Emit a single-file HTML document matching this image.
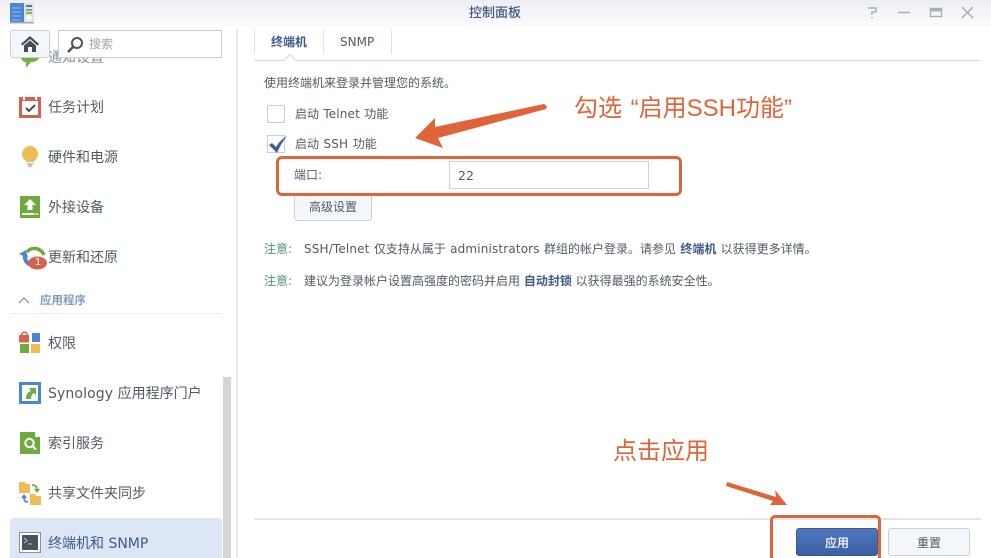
<!DOCTYPE html>
<html lang="zh"><head><meta charset="utf-8"><title>控制面板</title>
<style>
html,body{margin:0;padding:0;background:#fff}
#p{position:relative;width:991px;height:558px;overflow:hidden;background:#fff;font-family:"DejaVu Sans","Noto Sans CJK SC",sans-serif;color:#505a64;font-size:12px}
.t{position:absolute;white-space:nowrap;line-height:16px}
.m{font-size:14px;line-height:20px;color:#505a64;left:48px}
.a{position:absolute}
.l{letter-spacing:.15px}
.o{font-family:"Liberation Sans","Noto Sans CJK SC",sans-serif;color:#e0643a;font-size:24px;line-height:28px}
svg{position:absolute;overflow:visible}
</style></head><body><div id="p">
<div class="a" style="left:0;top:0;width:991px;height:28px;background:linear-gradient(#eceef4,#fdfdfe)"></div>
<svg style="left:10px;top:3px" width="24" height="20"><rect width="14" height="19" fill="#4a86d4"/><rect x="14" width="10" height="19" fill="#dfe3e8"/><path d="M2 5h9M2 9h9M2 13h9M2 17h9" stroke="#8fbbea"/><path d="M16 3h6" stroke="#4a78b0" stroke-width="2"/><path d="M16 7h6" stroke="#555"/><path d="M16 10h6" stroke="#8ab83a" stroke-width="2"/><circle cx="19" cy="15" r="3" fill="#f5f7f9"/><rect y="19" width="24" height="1.500" fill="#aaa"/></svg>
<div class="t" style="left:395px;width:200px;text-align:center;top:6px;font-size:13px;color:#3f5a80;font-weight:500">控制面板</div>
<svg style="left:860px;top:5px" width="120" height="16" fill="none" stroke="#a8b0ba" stroke-width="1.500"><path d="M8 3h8v4h-4v3"/><path d="M12 12v1.500"/><path d="M38 7.500h12"/><rect x="70.500" y="3.500" width="11" height="8"/><path d="M70 5h12" stroke-width="3"/><path d="M102 2l11 11M113 2l-11 11"/></svg>

<!-- sidebar -->
<div class="t m" style="top:48px;color:#8a9098">通知设置</div>
<svg style="left:20px;top:54px" width="20" height="14"><path d="M0 0h20c0 6-4 8-9 8l-5 6 0-6C2 8 0 4 0 0z" fill="#78b043"/></svg>
<div class="a" style="left:10px;top:30px;width:40px;height:28px;box-sizing:border-box;border:1px solid #c8d0da;border-radius:3px;background:#f3f6fa"></div>
<svg style="left:21px;top:36px" width="18" height="16" fill="#444c55"><path d="M9 0L0 8l1.500 1.500L9 3l7.500 6.500L18 8z"/><path d="M3 9.500L9 4.500l6 5V16h-4v-5H7v5H3z"/></svg>
<div class="a" style="left:58px;top:30px;width:164px;height:28px;box-sizing:border-box;border:1px solid #c8d0da;background:#fff"></div>
<svg style="left:67px;top:36px" width="17" height="17" fill="none" stroke="#4a525b"><circle cx="10" cy="7" r="5" stroke-width="2"/><path d="M6 11l-5 5" stroke-width="2.500"/></svg>
<div class="t" style="left:89px;top:36px;color:#9ea6b0">搜索</div>

<svg style="left:19px;top:96px" width="22" height="22"><rect y="1" width="22" height="21" fill="#d8604f"/><rect x="3" y="5" width="16" height="14" fill="#fff"/><rect x="4" y="0" width="2" height="4" fill="#fff"/><rect x="16" y="0" width="2" height="4" fill="#fff"/><path d="M7 12l3 3 6-6" stroke="#444c55" stroke-width="2" fill="none"/></svg>
<div class="t m" style="top:98px">任务计划</div>
<svg style="left:22px;top:146px" width="16" height="22"><circle cx="8" cy="8" r="8" fill="#efbb55"/><path d="M4 13h8v3H4z" fill="#efbb55"/><path d="M5 18h6M6 20h4" stroke="#9aa4b0" stroke-width="1.200"/></svg>
<div class="t m" style="top:148px">硬件和电源</div>
<svg style="left:20px;top:196px" width="20" height="22"><rect width="20" height="22" fill="#6eab3f"/><path d="M10 3l6 6h-3.500v5h-5V9H4z" fill="#fff"/><rect x="2" y="17" width="16" height="2" fill="#fff"/><rect x="14" y="17" width="3" height="2" fill="#efbb55"/></svg>
<div class="t m" style="top:198px">外接设备</div>
<svg style="left:18px;top:247px" width="30" height="24" fill="none"><path d="M9 5c5-6 14-4 17 3" stroke="#6eab3f" stroke-width="3.500"/><path d="M7 7c-1 6 2 10 7 11" stroke="#4a86d4" stroke-width="4"/><path d="M1 7l7-4 2 8z" fill="#4a86d4"/><ellipse cx="19.500" cy="16" rx="9.500" ry="6.500" fill="#d8604f"/></svg>
<div class="t" style="left:33px;top:255px;width:10px;text-align:center;color:#fff;font-size:10px">1</div>
<div class="t m" style="top:248px">更新和还原</div>
<svg style="left:18px;top:296px" width="12" height="8" fill="none" stroke="#8aa2bf" stroke-width="1.500"><path d="M1 7l5-5 5 5"/></svg>
<div class="t" style="left:40px;top:292px;font-size:11.500px;font-weight:700;color:#7f9cc0">应用程序</div>
<div class="a" style="left:10px;top:313px;width:212px;height:1px;background:#eceef1"></div>
<svg style="left:19px;top:332px" width="21" height="21"><path d="M2.500 4c0-5 6-5 6 0" fill="none" stroke="#d8604f" stroke-width="1.500"/><rect y="3" width="10" height="7.500" rx="1" fill="#d8604f"/><rect x="13" y="1" width="8" height="9" fill="#4a86d4"/><rect x="1" y="12" width="9" height="9" fill="#6eab3f"/><rect x="12" y="12" width="9" height="9" fill="#efbb55"/></svg>
<div class="t m" style="top:334px">权限</div>
<svg style="left:19px;top:382px" width="22" height="22"><rect width="22" height="22" fill="#4a86d4"/><rect x="3" y="3" width="16" height="16" fill="#fff"/><path d="M7 17c0-5 2-7 5-8l-2-3h7v7l-2-2c-2 1-3 3-3 6z" fill="#6eab3f"/></svg>
<div class="t m" style="top:384px"><span style="letter-spacing:.12px">Synology</span> 应用程序门户</div>
<svg style="left:20px;top:432px" width="20" height="22"><path d="M0 0h15l5 5v17H0z" fill="#6eab3f"/><path d="M15 0l5 5h-5z" fill="#fff"/><circle cx="9.500" cy="11" r="4.200" fill="none" stroke="#fff" stroke-width="2"/><path d="M12.500 14l3.500 3.500" stroke="#fff" stroke-width="2.200"/></svg>
<div class="t m" style="top:434px">索引服务</div>
<svg style="left:19px;top:482px" width="22" height="23"><path d="M0 0h6l1 2h4v9H0z" fill="#efbb55"/><path d="M11 12h5l1 2h5v9H11z" fill="#efbb55"/><path d="M13 3c4 0 5 2 5 5" fill="none" stroke="#6eab3f" stroke-width="1.800"/><path d="M15 7h6l-3 4z" fill="#6eab3f"/><path d="M9 20c-3 0-4-1-4-4" fill="none" stroke="#4a86d4" stroke-width="1.800"/><path d="M2 16h6l-3-4z" fill="#4a86d4"/></svg>
<div class="t m" style="top:484px">共享文件夹同步</div>
<div class="a" style="left:10px;top:518px;width:212px;height:40px;background:#dde6f5;border-radius:3px 3px 0 0"></div>
<svg style="left:19px;top:532px" width="22" height="21"><rect x=".500" y=".500" width="21" height="20" fill="#fff" stroke="#8a929c"/><rect x="3" y="3" width="16" height="15" fill="#4a525b"/><path d="M5 6l3 2.500-3 2.500" fill="none" stroke="#8fd0e0"/><path d="M9 12h4" stroke="#8fd0e0"/></svg>
<div class="t m" style="top:534px;color:#3f5a8a">终端机和 SNMP</div>
<div class="a" style="left:223px;top:377px;width:8px;height:181px;background:#d3d5d8"></div>
<div class="a" style="left:236px;top:30px;width:2px;height:528px;background:#e6e7ea"></div>

<!-- tabs -->
<div class="a" style="left:254px;top:30px;width:1px;height:24px;background:#dde2e8"></div>
<div class="a" style="left:323px;top:30px;width:1px;height:24px;background:#dde2e8"></div>
<div class="a" style="left:391px;top:30px;width:1px;height:24px;background:#dde2e8"></div>
<div class="t" style="left:271px;top:34px;font-weight:700;color:#3f5a8a">终端机</div>
<div class="t" style="left:340px;top:34px;color:#505a64">SNMP</div>
<svg style="left:254px;top:53px" width="727" height="9"><path d="M0 7.500h30l6-6 6 6h685" fill="#fff" stroke="#d5d9de"/></svg>

<div class="t" style="left:264px;top:75px">使用终端机来登录并管理您的系统。</div>
<div class="a" style="left:267px;top:105px;width:18px;height:18px;box-sizing:border-box;border:1px solid #c8ced6;background:#fff"></div>
<div class="t" style="left:295px;top:106px;word-spacing:.5px">启动 <span class="l">Telnet</span> 功能</div>
<div class="a" style="left:267px;top:135px;width:18px;height:18px;box-sizing:border-box;border:1px solid #c8ced6;background:#fff"></div>
<svg style="left:268px;top:136px" width="20" height="18"><path d="M1 9l3-2 4 4C11 6 14 3 19 0c-4 5-7 10-10 17z" fill="#3f5f96"/></svg>
<div class="t" style="left:295px;top:136px;word-spacing:.7px">启动 <span class="l">SSH</span> 功能</div>
<div class="t" style="left:294px;top:167px">端口:</div>
<div class="a" style="left:449px;top:161px;width:200px;height:28px;box-sizing:border-box;border:1px solid #ccd2d9;background:#fff;padding:6px 8px;line-height:15px;font-size:12.500px">22</div>
<div class="a" style="left:294px;top:194px;width:78px;height:27px;box-sizing:border-box;border:1px solid #c8d0da;border-top:0;border-radius:0 0 3px 3px;background:#f3f6fa;text-align:center;line-height:27px">高级设置</div>
<div class="t" style="left:264px;top:241px;color:#4f9272">注意:</div>
<div class="t" style="left:304px;top:241px;word-spacing:.5px"><span class="l">SSH/Telnet</span> 仅支持从属于 <span class="l">administrators</span> 群组的帐户登录。请参见 <b style="color:#3f5a8a">终端机</b> 以获得更多详情。</div>
<div class="t" style="left:264px;top:273px;color:#4f9272">注意:</div>
<div class="t" style="left:304px;top:273px">建议为登录帐户设置高强度的密码并启用 <b style="color:#3f5a8a">自动封锁</b> 以获得最强的系统安全性。</div>

<!-- footer -->
<div class="a" style="left:254px;top:518px;width:727px;height:2px;background:#e3e5e8"></div>
<div class="a" style="left:796px;top:528px;width:82px;height:28px;box-sizing:border-box;border:1px solid #3a5a98;border-radius:3px;background:linear-gradient(#5078bc,#3c5fa4);color:#fff;font-weight:500;text-align:center;line-height:28px">应用</div>
<div class="a" style="left:888px;top:528px;width:82px;height:28px;box-sizing:border-box;border:1px solid #c8d0da;border-radius:3px;background:#f3f6fa;text-align:center;line-height:28px">重置</div>

<!-- annotations -->
<div class="a" style="left:276px;top:156px;width:406px;height:40px;box-sizing:border-box;border:3px solid #e0643a;border-radius:6px"></div>
<div class="a" style="left:770px;top:515px;width:111px;height:50px;box-sizing:border-box;border:3px solid #e0643a;border-radius:5px"></div>
<svg style="left:0;top:0" width="991" height="558" fill="#e0643a"><path d="M415 138L435 118 435 127 544 104Q548 106 546 109L438 138 443 148z"/><path d="M727 482L776 497 775 490 787 505 770 505 773 501 726 486z"/></svg>
<div class="t o" style="left:574px;top:95px;word-spacing:2px">勾选 “启用SSH功能”</div>
<div class="t o" style="left:613px;top:438px">点击应用</div>
</div></body></html>
